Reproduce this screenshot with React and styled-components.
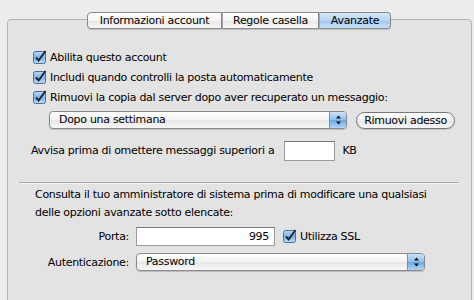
import styled, { createGlobalStyle } from 'styled-components';

const Global = createGlobalStyle`
  html, body { margin: 0; padding: 0; }
  body {
    background: #ececec;
    font-family: "DejaVu Sans", "Lucida Grande", sans-serif;
    font-size: 11px;
    letter-spacing: -0.3px;
    color: #000;
    width: 474px;
    height: 300px;
    overflow: hidden;
  }
`;

const Window = styled.div`
  padding: 12px 2px 0 7px;
`;

const TabBar = styled.div`
  display: flex;
  justify-content: center;
  position: relative;
  z-index: 1;
  margin-bottom: -10px;
  padding-right: 1px;
`;

const Tab = styled.div`
  height: 15px;
  line-height: 15px;
  width: ${(p) => p.$w}px;
  text-align: center;
  border: 1px solid #8a8a8a;
  border-left-width: ${(p) => (p.$first ? 1 : 0)}px;
  border-radius: ${(p) => (p.$first ? '4px 0 0 4px' : p.$last ? '0 4px 4px 0' : '0')};
  background: ${(p) =>
    p.$active
      ? 'linear-gradient(#d6e8f9, #b4d4f3 50%, #9fc7ef 51%, #c9e2fb)'
      : 'linear-gradient(#ffffff, #f4f4f4 50%, #e8e8e8 51%, #f6f6f6)'};
  box-shadow: 0 1px 1px rgba(0, 0, 0, 0.15);
  white-space: nowrap;
  & + & { border-left: 1px solid #a8a8a8; }
`;

const Panel = styled.div`
  height: 290px;
  border: 1px solid #b4b4b4;
  border-radius: 4px;
  background: #e3e3e3;
  padding: 22px 0 0 0;
  box-sizing: border-box;
`;

const Section = styled.div`
  padding: ${(p) => p.$pad};
  display: flex;
  flex-direction: column;
  gap: ${(p) => p.$gap || 0}px;
`;

const Row = styled.div`
  display: flex;
  align-items: center;
  height: ${(p) => p.$h || 20}px;
  margin-left: ${(p) => p.$indent || 0}px;
  gap: ${(p) => p.$gap || 0}px;
`;

const Label = styled.span`
  white-space: nowrap;
  margin-left: ${(p) => p.$ml || 0}px;
`;

const FormLabel = styled.span`
  width: 121px;
  text-align: right;
  margin-right: 7px;
  white-space: nowrap;
`;

const Box = styled.svg`
  flex: none;
  margin-right: 3px;
`;

function Check() {
  return (
    <Box width="14" height="14" viewBox="0 0 14 14">
      <defs>
        <linearGradient id="cb" x1="0" y1="0" x2="0" y2="1">
          <stop offset="0" stopColor="#b8d8f6" />
          <stop offset="0.5" stopColor="#7fb3e6" />
          <stop offset="1" stopColor="#b9dcfb" />
        </linearGradient>
      </defs>
      <rect x="0.5" y="1.5" width="12" height="12" rx="2" fill="url(#cb)" stroke="#4f6f8f" />
      <path d="M3 7.5 L5.6 10.5 L12.5 1" fill="none" stroke="#1b2630" strokeWidth="2" />
    </Box>
  );
}

const Popup = styled.div`
  width: ${(p) => p.$w}px;
  height: 16px;
  border: 1px solid #8a8a8a;
  border-radius: 4px;
  background: linear-gradient(#ffffff, #f3f3f3 50%, #e6e6e6 51%, #f8f8f8);
  box-shadow: 0 1px 1px rgba(0, 0, 0, 0.18);
  display: flex;
  align-items: center;
  overflow: hidden;
`;

const PopupText = styled.span`
  flex: 1;
  padding-left: 9px;
  line-height: 16px;
`;

const Stepper = styled.div`
  width: 16px;
  height: 16px;
  border-left: 1px solid #7a8ea6;
  background: linear-gradient(#cde3f8, #8cbcec 50%, #6aa6e2 51%, #b3d6f7);
  display: flex;
  align-items: center;
  justify-content: center;
`;

function Arrows() {
  return (
    <svg width="7" height="10" viewBox="0 0 7 10">
      <path d="M3.5 0.5 L6 3.5 H1 Z" fill="#111" />
      <path d="M3.5 9.5 L6 6.5 H1 Z" fill="#111" />
    </svg>
  );
}

const PillButton = styled.button`
  font: inherit;
  letter-spacing: inherit;
  height: 17px;
  width: 99px;
  padding: 0;
  border: 1px solid #777;
  border-radius: 9px;
  background: linear-gradient(#ffffff, #f2f2f2 50%, #e4e4e4 51%, #f7f7f7);
  box-shadow: 0 1px 1px rgba(0, 0, 0, 0.15);
  color: #000;
  line-height: 15px;
`;

const TextField = styled.div`
  width: ${(p) => p.$w}px;
  height: ${(p) => p.$h}px;
  background: #fff;
  border: 1px solid #9a9a9a;
  border-top-color: #777;
  box-sizing: border-box;
  text-align: right;
  padding-right: 5px;
  line-height: ${(p) => p.$h - 2}px;
  margin: 0 ${(p) => p.$mr || 0}px 0 ${(p) => p.$ml || 0}px;
`;

const Separator = styled.div`
  height: 1px;
  background: #a9a9a9;
  margin: 14px 12px 0 11px;
  border-bottom: 1px solid #f2f2f2;
`;

const Para = styled.p`
  margin: 2px 0 0 27px;
  line-height: 18px;
  white-space: nowrap;
`;

export default function App() {
  return (
    <>
      <Global />
      <Window>
        <TabBar>
          <Tab $first $w={133}>Informazioni account</Tab>
          <Tab $w={95}>Regole casella</Tab>
          <Tab $last $active $w={70}>Avanzate</Tab>
        </TabBar>
        <Panel>
          <Section $pad="5px 0 0 25px">
            <Row $h={20}>
              <Check />
              <Label>Abilita questo account</Label>
            </Row>
            <Row $h={20}>
              <Check />
              <Label>Includi quando controlli la posta automaticamente</Label>
            </Row>
            <Row $h={20}>
              <Check />
              <Label>Rimuovi la copia dal server dopo aver recuperato un messaggio:</Label>
            </Row>
            <Row $h={26} $indent={16} $gap={9}>
              <Popup $w={296}>
                <PopupText>Dopo una settimana</PopupText>
                <Stepper><Arrows /></Stepper>
              </Popup>
              <PillButton>Rimuovi adesso</PillButton>
            </Row>
            <Row $h={35}>
              <Label $ml={-2}>Avvisa prima di omettere messaggi superiori a</Label>
              <TextField $w={51} $h={20} $ml={10} $mr={7} />
              <Label>KB</Label>
            </Row>
          </Section>
          <Separator />
          <Para>
            Consulta il tuo amministratore di sistema prima di modificare una qualsiasi
            <br />
            delle opzioni avanzate sotto elencate:
          </Para>
          <Section $pad="4px 0 0 0" $gap={7}>
            <Row $h={20}>
              <FormLabel>Porta:</FormLabel>
              <TextField $w={139} $h={19} $mr={8}>995</TextField>
              <Check />
              <Label>Utilizza SSL</Label>
            </Row>
            <Row $h={18}>
              <FormLabel>Autenticazione:</FormLabel>
              <Popup $w={287}>
                <PopupText>Password</PopupText>
                <Stepper><Arrows /></Stepper>
              </Popup>
            </Row>
          </Section>
        </Panel>
      </Window>
    </>
  );
}
